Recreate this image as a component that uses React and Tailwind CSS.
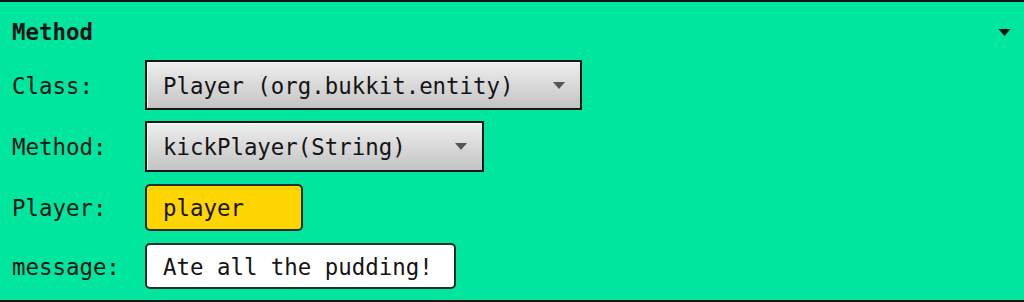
import React from 'react';

const mono = { fontFamily: '"DejaVu Sans Mono", "Liberation Mono", monospace' };

function Caret({ className, w = 12, h = 7 }) {
  return (
    <svg width={w} height={h} viewBox="0 0 12 7" className={className}>
      <path d="M0 0 H12 L6 7 Z" fill="currentColor" />
    </svg>
  );
}

function Select({ value, width, height }) {
  return (
    <div
      className={`flex items-center justify-between border-2 border-[#151515] bg-gradient-to-b from-[#eeeeee] to-[#c4c4c4] pl-4 pr-[15px] shadow-[inset_1px_1px_0_#f8f8f8] ${width} ${height}`}
    >
      <span className="pt-[2px] text-[22.4px] leading-none text-[#141414]">{value}</span>
      <Caret className="text-[#555555]" />
    </div>
  );
}

function Field({ value, width, height, bg }) {
  return (
    <div
      className={`flex items-center rounded-[5px] border-2 border-[#2b2b2b] pl-4 ${bg} ${width} ${height}`}
    >
      <span className="pt-[2px] text-[22.4px] leading-none text-[#141414]">{value}</span>
    </div>
  );
}

export default function App() {
  return (
    <div
      style={mono}
      className="h-[302px] w-[1024px] border-t-2 border-b-2 border-[#141414] bg-[#00e69e] px-3"
    >
      <div className="mt-[15px] flex h-[30px] items-center justify-between">
        <span className="text-[22.4px] font-bold leading-none text-[#141414]">Method</span>
        <Caret className="mr-[1px] text-[#111111]" w={13} h={7} />
      </div>

      <div className="mt-[13px] grid grid-cols-[133px_auto] items-center gap-y-[11px] text-[22.4px] leading-none text-[#141414]">
        <span className="pt-[2px]">Class:</span>
        <Select value="Player (org.bukkit.entity)" width="w-[437px]" height="h-[50px]" />

        <span className="pt-[2px]">Method:</span>
        <Select value="kickPlayer(String)" width="w-[339px]" height="h-[51px]" />

        <span className="mt-px pt-[2px]">Player:</span>
        <div className="mt-px">
          <Field value="player" width="w-[158px]" height="h-[47px]" bg="bg-[#ffd500]" />
        </div>

        <span className="mt-px pt-[2px]">message:</span>
        <div className="mt-px">
          <Field value="Ate all the pudding!" width="w-[311px]" height="h-[46px]" bg="bg-white" />
        </div>
      </div>
    </div>
  );
}
